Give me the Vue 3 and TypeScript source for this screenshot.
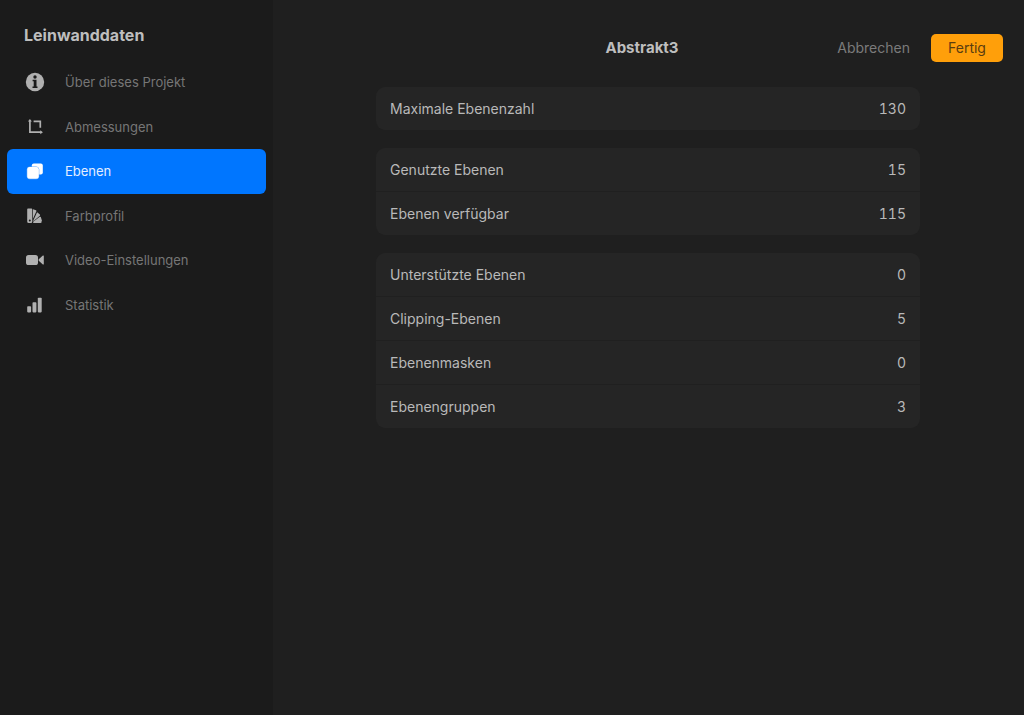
<script setup lang="ts">
import { ref } from 'vue'

type IconName = 'info' | 'crop' | 'layers' | 'swatch' | 'video' | 'stats'
interface NavItem { icon: IconName; label: string }
interface Row { label: string; value: number }

const items: NavItem[] = [
  { icon: 'info', label: 'Über dieses Projekt' },
  { icon: 'crop', label: 'Abmessungen' },
  { icon: 'layers', label: 'Ebenen' },
  { icon: 'swatch', label: 'Farbprofil' },
  { icon: 'video', label: 'Video-Einstellungen' },
  { icon: 'stats', label: 'Statistik' },
]
const active = ref<IconName>('layers')

const groups: Row[][] = [
  [{ label: 'Maximale Ebenenzahl', value: 130 }],
  [
    { label: 'Genutzte Ebenen', value: 15 },
    { label: 'Ebenen verfügbar', value: 115 },
  ],
  [
    { label: 'Unterstützte Ebenen', value: 0 },
    { label: 'Clipping-Ebenen', value: 5 },
    { label: 'Ebenenmasken', value: 0 },
    { label: 'Ebenengruppen', value: 3 },
  ],
]
</script>

<template>
  <div class="window">
    <aside class="sidebar">
      <h1 class="heading">Leinwanddaten</h1>
      <nav class="nav">
        <button
          v-for="item in items"
          :key="item.icon"
          type="button"
          class="nav-item"
          :class="{ active: active === item.icon }"
          :aria-current="active === item.icon ? 'page' : undefined"
          @click="active = item.icon"
        >
          <svg class="icon" viewBox="0 0 20 20" aria-hidden="true">
            <template v-if="item.icon === 'info'">
              <circle cx="10" cy="10" r="9.2" fill="currentColor" />
              <circle class="cut" cx="10" cy="5" r="1.7" />
              <path class="cut" d="M7.6 7.7h3.9v6.8h1v1.5H7.5v-1.5h1.2V9.2H7.6z" />
            </template>
            <template v-else-if="item.icon === 'crop'">
              <path d="M4.9 4v11.2h11.2M8.6 4.4h6.7v6.4" fill="none" stroke="currentColor" stroke-width="1.7" />
              <path d="M4.9 2l2 2.6h-4zM17.9 15.2l-2.6 2v-4z" fill="currentColor" />
            </template>
            <template v-else-if="item.icon === 'layers'">
              <rect x="6.8" y="2.5" width="11" height="11" rx="2" fill="currentColor" />
              <rect class="layer-front" x="2.2" y="6" width="11.6" height="11.8" rx="2.4" fill="currentColor" />
            </template>
            <template v-else-if="item.icon === 'swatch'">
              <path fill="currentColor" fill-rule="evenodd" d="M3 2.5h3.4q.9 0 .9.9v12.2q0 1.5-1.5 1.5H3.7q-1.5 0-1.5-1.5V3.3q0-.8.8-.8zM4.8 13.4a1 1 0 1 0 0 2 1 1 0 0 0 0-2z" />
              <path fill="currentColor" d="M8 3.2l3 1.1q.6.3.4.9L8 12.8zM12.1 6.2l2.8 2.4q.5.5 0 1.1L8.3 15.2v-.8zM15.8 11.1l1.1 3.3q.2.5-.3.7V16q0 1.1-1.1 1.1H8.2v-1.4l6.6-4.9q.7-.4 1 .3z" />
            </template>
            <template v-else-if="item.icon === 'video'">
              <rect x="1" y="5" width="12" height="10" rx="2.6" fill="currentColor" />
              <path d="M13.7 9.2l4.2-3.6q.9-.6.9.5v7.8q0 1.1-.9.5l-4.2-3.6z" fill="currentColor" />
            </template>
            <template v-else>
              <rect x="2.2" y="11.2" width="3.9" height="6.2" rx=".8" fill="currentColor" />
              <rect x="7.5" y="7.2" width="3.9" height="10.2" rx=".8" fill="currentColor" />
              <rect x="12.8" y="2.7" width="3.9" height="14.7" rx=".8" fill="currentColor" />
            </template>
          </svg>
          <span>{{ item.label }}</span>
        </button>
      </nav>
    </aside>

    <main class="content">
      <header class="topbar">
        <h2 class="title">Abstrakt3</h2>
        <div class="actions">
          <button type="button" class="cancel">Abbrechen</button>
          <button type="button" class="done">Fertig</button>
        </div>
      </header>
      <div class="groups">
        <dl v-for="(group, i) in groups" :key="i" class="card">
          <div v-for="row in group" :key="row.label" class="row">
            <dt>{{ row.label }}</dt>
            <dd>{{ row.value }}</dd>
          </div>
        </dl>
      </div>
    </main>
  </div>
</template>

<style>
body {
  margin: 0;
  background: #1f1f1f;
}
</style>

<style scoped>
.window {
  display: grid;
  grid-template-columns: 273px 1fr;
  min-height: 100vh;
  background: #1f1f1f;
  color: #b9b9b9;
  font-family: Inter, "Liberation Sans", sans-serif;
}
button {
  margin: 0;
  border: 0;
  background: none;
  color: inherit;
  font: inherit;
  cursor: pointer;
}
.sidebar {
  box-sizing: border-box;
  padding: 24px 7px 0;
  background: #1b1b1b;
}
.heading {
  margin: 0 0 14px;
  padding-left: 17px;
  font-size: 16px;
  line-height: 22px;
  font-weight: 700;
  color: #bebebe;
}
.nav {
  display: grid;
  grid-auto-rows: 1fr;
  height: 267px;
}
.nav-item {
  display: flex;
  align-items: center;
  gap: 20px;
  padding: 0 18px;
  border-radius: 6px;
  color: #767676;
  font-size: 13px;
  line-height: 18px;
  text-align: left;
}
.nav-item.active {
  background: #0076ff;
  color: #e4eeff;
}
.icon {
  flex: none;
  width: 20px;
  height: 20px;
  color: #b0b0b0;
}
.active .icon {
  color: #fff;
}
.cut {
  fill: #1b1b1b;
}
.layer-front {
  stroke: #1b1b1b;
  stroke-width: 1;
  paint-order: stroke;
}
.active .layer-front {
  stroke: #5ba6ff;
}
.content {
  min-width: 0;
}
.topbar {
  display: grid;
  grid-template-columns: 1fr auto 1fr;
  align-items: center;
  padding: 34px 21px 25px 8px;
}
.title {
  grid-column: 2;
  margin: 0;
  font-size: 15px;
  line-height: 28px;
  font-weight: 700;
  color: #bebebe;
}
.actions {
  display: flex;
  justify-content: flex-end;
  gap: 21px;
  font-size: 14px;
  line-height: 28px;
}
.cancel {
  padding: 0;
  color: #7b7b7b;
}
.done {
  width: 72px;
  padding: 0;
  border-radius: 5px;
  background: #ff9f0a;
  color: #5a3d10;
}
.groups {
  display: grid;
  gap: 18px;
  margin: 0 104px 0 103px;
}
.card {
  margin: 0;
  border-radius: 9px;
  background: #252525;
}
.row {
  display: flex;
  justify-content: space-between;
  padding: 0 14px;
  font-size: 14px;
  line-height: 43px;
}
.row + .row {
  border-top: 1px solid #202020;
}
dd {
  margin: 0;
  font-variant-numeric: tabular-nums;
}
</style>
